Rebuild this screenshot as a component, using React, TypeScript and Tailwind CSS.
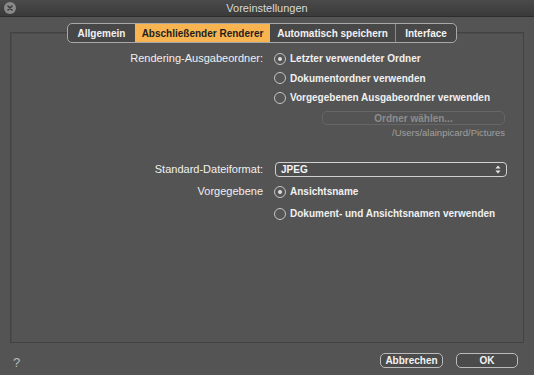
import React from "react";

const font = { fontFamily: '"Liberation Sans", Arial, sans-serif' };

function Radio({ checked, label }: { checked?: boolean; label: string }) {
  return (
    <div className="flex items-center h-[19.5px]">
      <span className="w-[12px] h-[12px] rounded-full border border-[#c4c4c4] flex items-center justify-center mr-[4px] bg-[#555]">
        {checked && <span className="w-[4px] h-[4px] rounded-full bg-[#e0e0e0]" />}
      </span>
      <span className="text-[10px] font-bold text-[#f0f0f0]">{label}</span>
    </div>
  );
}

export default function App() {
  const tabs = ["Allgemein", "Abschließender Renderer", "Automatisch speichern", "Interface"];
  const widths = ["w-[67px]", "w-[135px]", "w-[126px]", "w-[60px]"];
  return (
    <div className="w-[534px] h-[375px] bg-[#545454] flex flex-col overflow-hidden" style={font}>
      <div className="h-[17px] bg-gradient-to-b from-[#4a4a4a] to-[#3a3a3a] border-b border-[#2c2c2c] flex items-center relative">
        <div className="absolute left-[4px] top-[2px] w-[12px] h-[12px] rounded-full bg-[#8a8a8a] flex items-center justify-center">
          <svg width="6" height="6" viewBox="0 0 6 6">
            <path d="M1 1L5 5M5 1L1 5" stroke="#3a3a3a" strokeWidth="1.6" strokeLinecap="round" />
          </svg>
        </div>
        <div className="flex-1 text-center text-[11px] text-[#d8d8d8]">Voreinstellungen</div>
      </div>

      <div className="flex mt-[6px] pl-[67px]">
        <div className="flex h-[20px] rounded-[5px] border border-[#a8a8a8] bg-[#474747] overflow-hidden z-10">
          {tabs.map((t, i) => (
            <div
              key={t}
              className={`${widths[i]} flex items-center justify-center text-[10px] font-bold ${
                i === 1 ? "bg-[#f8b450] text-[#1e1e1e]" : "text-[#f2f2f2]"
              } ${i === 0 || i === 1 || i === 3 ? "" : "border-r border-[#8a8a8a]"}`}
            >
              {t}
            </div>
          ))}
        </div>
      </div>

      <div className="mx-[10px] mt-[-11px] h-[311px] border border-[#424242] shadow-[inset_1px_1px_0_#4c4c4c] flex flex-col pt-[16px]">
        <div className="flex">
          <div className="w-[252px] text-right text-[11px] text-[#f0f0f0] leading-[19.5px]">
            Rendering-Ausgabeordner:
          </div>
          <div className="ml-[11px] flex flex-col">
            <Radio checked label="Letzter verwendeter Ordner" />
            <Radio label="Dokumentordner verwenden" />
            <Radio label="Vorgegebenen Ausgabeordner verwenden" />
          </div>
        </div>
        <div className="flex flex-col items-end pr-[18px] mt-[3.5px]">
          <div className="w-[183px] h-[14px] rounded-[5px] border border-[#666] flex items-center justify-center text-[10px] font-bold text-[#8c8c8c]">
            Ordner wählen...
          </div>
          <div className="mt-[2px] leading-[11px] text-[9.5px] text-[#a0a0a0]">/Users/alainpicard/Pictures</div>
        </div>

        <div className="flex items-center mt-[23px]">
          <div className="w-[252px] text-right text-[11px] text-[#f0f0f0]">Standard-Dateiformat:</div>
          <div className="ml-[12px] w-[232px] h-[15px] rounded-[4px] border border-[#d0d0d0] bg-[#4e4e4e] flex items-center justify-between px-[5px]">
            <span className="text-[10px] font-bold text-[#f4f4f4]">JPEG</span>
            <svg width="6" height="9" viewBox="0 0 6 9">
              <path d="M0.5 3.5L3 0.5L5.5 3.5Z M0.5 5.5L3 8.5L5.5 5.5Z" fill="#e8e8e8" />
            </svg>
          </div>
        </div>

        <div className="flex mt-[4.5px]">
          <div className="w-[252px] text-right text-[11px] text-[#f0f0f0] leading-[19.5px]">Vorgegebene</div>
          <div className="ml-[11px] flex flex-col gap-[2.5px]">
            <Radio checked label="Ansichtsname" />
            <Radio label="Dokument- und Ansichtsnamen verwenden" />
          </div>
        </div>
      </div>

      <div className="flex items-center mt-[10px] h-[15px]">
        <span className="ml-[13px] mt-[4px] text-[13px] text-[#bdbdbd]">?</span>
        <div className="flex-1" />
        <div className="w-[63px] h-[15px] rounded-[5px] border border-[#bbb] bg-[#4b4b4b] flex items-center justify-center text-[10px] font-bold text-[#f2f2f2]">
          Abbrechen
        </div>
        <div className="ml-[13px] mr-[16px] w-[62px] h-[15px] rounded-[5px] border border-[#bbb] bg-[#4b4b4b] flex items-center justify-center text-[10px] font-bold text-[#f2f2f2]">
          OK
        </div>
      </div>
    </div>
  );
}
